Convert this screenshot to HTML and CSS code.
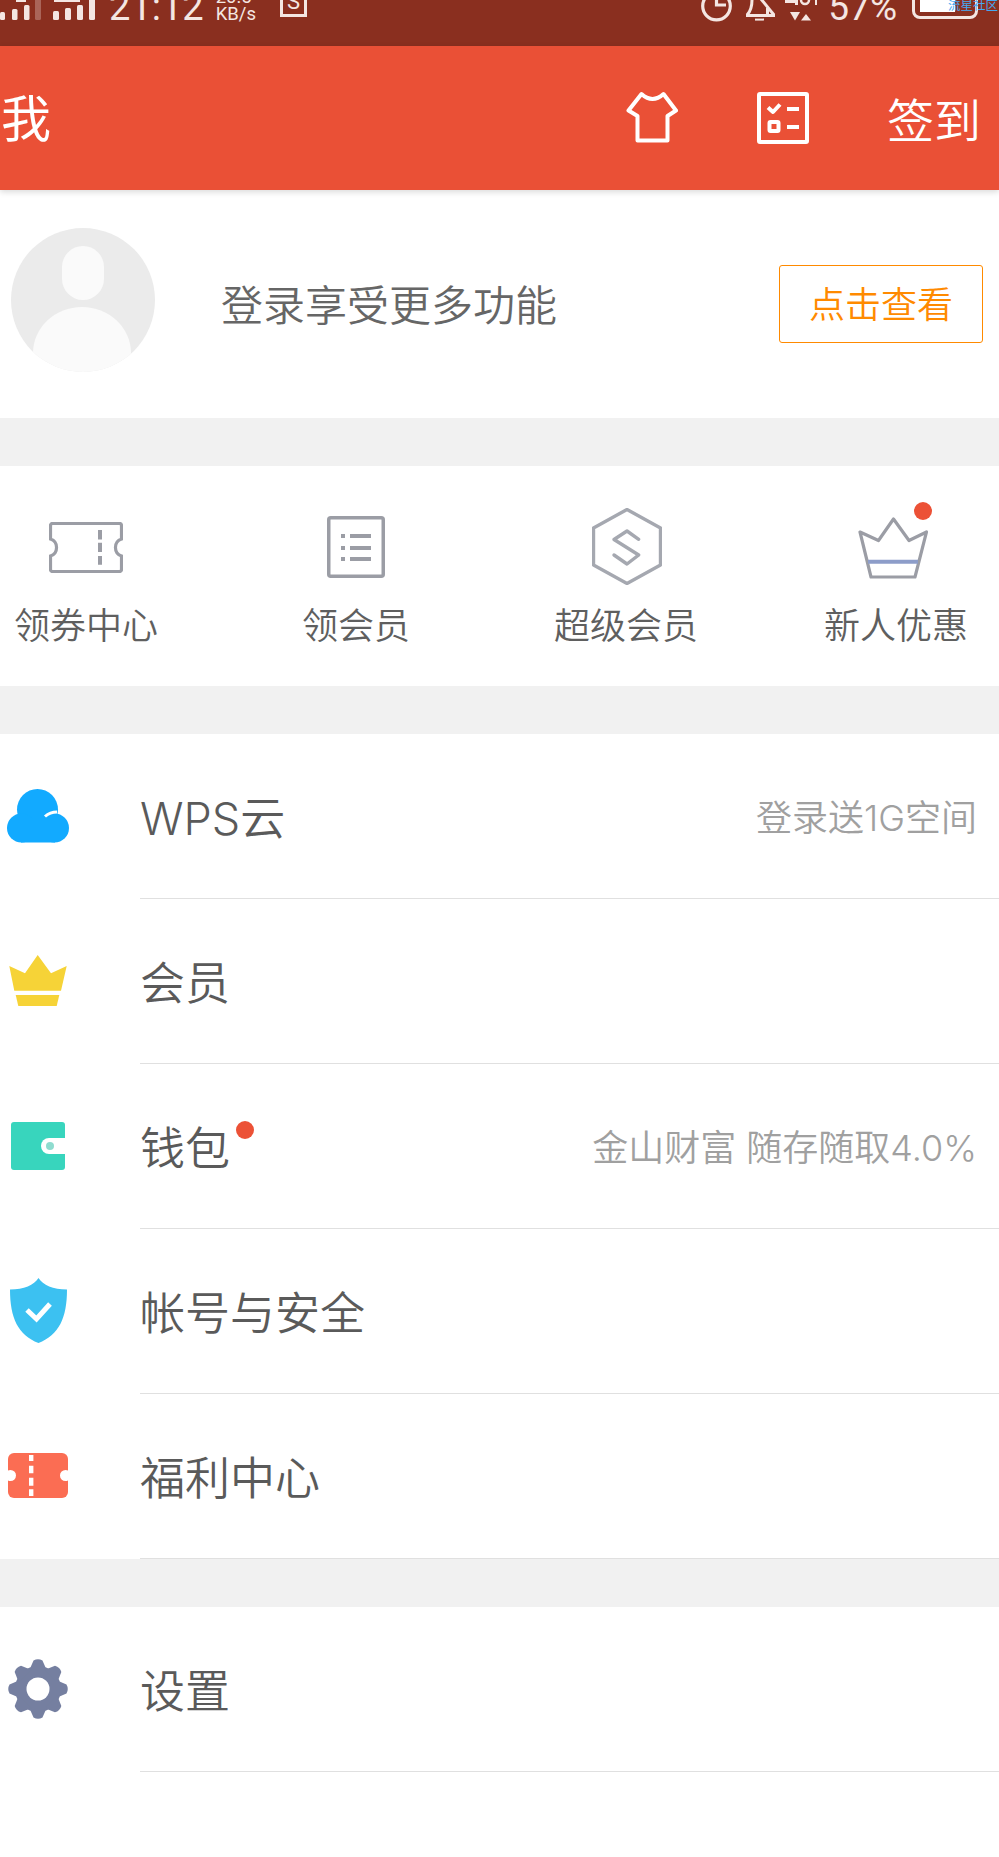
FILE: index.html
```html
<!DOCTYPE html>
<html lang="zh-CN">

<head>
    <meta charset="UTF-8">
    <meta name="viewport" content="width=device-width, initial-scale=1.0">
    <title>我</title>
    <link rel="stylesheet" href="styles.css">
</head>

<body>
    <div class="status-bar">
        <svg class="signal" width="96" height="21" viewBox="0 0 96 21">
            <rect x="0" y="12" width="5" height="8" rx="1.5"/>
            <rect x="12" y="9" width="5.5" height="11" rx="1.5"/>
            <rect x="24" y="5" width="5.5" height="15" rx="1.5"/>
            <rect x="35" y="-2" width="6" height="22" rx="1.5" opacity="0.3"/>
            <rect x="16" y="0" width="10" height="2"/>
            <rect x="53" y="11" width="6" height="9" rx="1.5"/>
            <rect x="65" y="8" width="6" height="12" rx="1.5"/>
            <rect x="77" y="5" width="6" height="15" rx="1.5"/>
            <rect x="89" y="-2" width="6" height="22" rx="1.5"/>
            <rect x="54" y="0" width="26" height="2"/>
        </svg>
        <span class="clock">21:12</span>
        <div class="speed"><span>20.5</span><span>KB/s</span></div>
        <div class="sim-box">S</div>
        <svg class="alarm" width="32" height="22" viewBox="0 0 32 22" fill="none" stroke="#f4e6e2" stroke-width="3.2">
            <circle cx="15.5" cy="6" r="13.8"/>
            <path d="M15.5 -4V5H25"/>
        </svg>
        <svg class="bell" width="31" height="21" viewBox="0 0 31 21" fill="none" stroke="#f4e6e2" stroke-width="3">
            <path d="M1 15.5H30M2 15C6 11 7 6 7 0M22.500 8V15"/>
            <path d="M16 -1L29 15"/>
            <path d="M10 19.6H19" stroke-width="2"/>
        </svg>
        <svg class="net" width="33" height="21" viewBox="0 0 33 21" fill="#f4e6e2">
            <path d="M5 12H15L10 20.5z"/>
            <path d="M16 20.5H26L21 14z"/>
            <rect x="0" y="0" width="11" height="3"/>
            <rect x="10" y="0" width="3" height="5"/>
            <circle cx="20" cy="0" r="4" fill="none" stroke="#f4e6e2" stroke-width="2.5"/>
            <rect x="30" y="0" width="2" height="5"/>
        </svg>
        <span class="percent">57%</span>
        <div class="battery"><div class="battery-fill"></div></div>
        <span class="watermark">流星社区</span>
    </div>

    <header class="top-bar">
        <h1 class="page-title">我</h1>
        <svg class="shirt" width="52" height="52" viewBox="0 0 52 52" fill="none" stroke="#fff" stroke-width="4" stroke-linejoin="round">
            <path d="M15.5 3Q26.5 13 37.500 3L50 19.5L41.5 25V49.5H11.5V25L2.5 19.5z"/>
        </svg>
        <svg class="tasks" width="52" height="52" viewBox="0 0 52 52" fill="none" stroke="#fff" stroke-width="4" stroke-linejoin="round">
            <rect x="2" y="2" width="48" height="48" rx="1"/>
            <path d="M11 15.5L16 20L23 12.5M30 17H42M30 35H42"/>
            <rect x="12.5" y="30" width="9" height="9" rx="1"/>
        </svg>
        <span class="sign-in">签到</span>
    </header>

    <section class="profile">
        <svg class="avatar" width="144" height="144" viewBox="0 0 144 144">
            <clipPath id="avatarClip"><circle cx="72" cy="72" r="72"/></clipPath>
            <circle cx="72" cy="72" r="72" fill="#ebebeb"/>
            <rect x="51" y="18" width="42" height="54" rx="21" fill="#fafafa"/>
            <ellipse cx="71" cy="125" rx="49" ry="46" fill="#fafafa" clip-path="url(#avatarClip)"/>
        </svg>
        <p class="profile-text">登录享受更多功能</p>
        <a class="profile-btn">点击查看</a>
    </section>

    <section class="shortcuts">
        <div class="shortcut">
            <div class="shortcut-icon">
                <svg width="74" height="51" viewBox="0 0 74 51" fill="none" stroke="#9b9da5" stroke-width="3.2">
                    <path d="M3.5 1.5H70.5a2 2 0 0 1 2 2V17a9 9 0 0 0 0 17V47.5a2 2 0 0 1-2 2H3.5a2 2 0 0 1-2-2V34a9 9 0 0 0 0-17V3.5a2 2 0 0 1 2-2z"/>
                    <path d="M51 8V17.5M51 20.7V30M51 34V42.7" stroke-width="4"/>
                </svg>
            </div>
            <span>领券中心</span>
        </div>
        <div class="shortcut">
            <div class="shortcut-icon">
                <svg width="58" height="62" viewBox="0 0 58 62" fill="none" stroke="#9b9da5" stroke-width="3.5">
                    <rect x="1.75" y="1.75" width="54.5" height="58.5" rx="2"/>
                    <path d="M14 20H18M23 20H44M14 32H18M23 32H44M14 43H18M23 43H44" stroke-width="4"/>
                </svg>
            </div>
            <span>领会员</span>
        </div>
        <div class="shortcut">
            <div class="shortcut-icon">
                <svg class="hex-icon" width="70" height="77" viewBox="0 0 70 77" fill="none" stroke="#a5a8b0" stroke-width="3.4" stroke-linejoin="round" stroke-linecap="round">
                    <path d="M35 1.5L68.5 20V57L35 75.5L1.5 57V20z"/>
                    <path d="M46.7 31.3L35 23L22 31.5L46.7 47L35 56L22 47"/>
                </svg>
            </div>
            <span>超级会员</span>
        </div>
        <div class="shortcut">
            <div class="shortcut-icon">
                <svg class="crown-icon" width="70" height="62" viewBox="0 0 70 62" fill="none" stroke="#9b9da5" stroke-width="3.2" stroke-linejoin="round">
                    <path d="M2 15L20.5 23.5L35.5 2L51 23.5L68.5 15L57 60H13z"/>
                    <path d="M10 44.7H60" stroke="#8d9dc9" stroke-width="4"/>
                </svg>
                <i class="red-dot shortcut-dot"></i>
            </div>
            <span>新人优惠</span>
        </div>
    </section>

    <section class="menu">
        <div class="menu-row">
            <div class="menu-icon">
                <svg width="62" height="54" viewBox="0 0 62 54" fill="#12aaff">
                    <circle cx="30.5" cy="20.5" r="20.5"/>
                    <circle cx="14.5" cy="39" r="14.5"/>
                    <circle cx="47.5" cy="39" r="14.5"/>
                    <rect x="14" y="30" width="34" height="23.5"/>
                    <path d="M38 27.5Q43 23 50 23" fill="none" stroke="#fff" stroke-width="3"/>
                </svg>
            </div>
            <div class="menu-body">
                <span class="menu-label">WPS云</span>
                <span class="menu-note">登录送1G空间</span>
            </div>
        </div>
        <div class="menu-row">
            <div class="menu-icon">
                <svg width="58" height="51" viewBox="0 0 58 51" fill="#f6d337">
                    <path d="M28.7 0L42 18.3L57.7 11L52 35.7H5.3L.3 11L16 18.3z"/>
                    <path d="M6.7 40H50.3L47.7 51H9.3z"/>
                </svg>
            </div>
            <div class="menu-body">
                <span class="menu-label">会员</span>
            </div>
        </div>
        <div class="menu-row">
            <div class="menu-icon">
                <svg width="54" height="48" viewBox="0 0 54 48">
                    <rect width="54" height="48" rx="3" fill="#38d5bd"/>
                    <path d="M54 16H38a8 8 0 0 0 0 16H54z" fill="#fff"/>
                    <circle cx="39" cy="24" r="4" fill="#8fdccf"/>
                </svg>
            </div>
            <div class="menu-body">
                <span class="menu-label">钱包<i class="red-dot label-dot"></i></span>
                <span class="menu-note">金山财富&nbsp;随存随取4.0%</span>
            </div>
        </div>
        <div class="menu-row">
            <div class="menu-icon">
                <svg width="57" height="65" viewBox="0 0 57 65">
                    <path d="M28.5 0C24 7 14 11.5 0 11.5C0 40 8 57 28.5 65C49 57 57 40 57 11.5C43 11.5 33 7 28.5 0z" fill="#3cc1f1"/>
                    <path d="M17 32L26.5 41L40 26" fill="none" stroke="#fff" stroke-width="5"/>
                </svg>
            </div>
            <div class="menu-body">
                <span class="menu-label">帐号与安全</span>
            </div>
        </div>
        <div class="menu-row">
            <div class="menu-icon">
                <svg width="60" height="45" viewBox="0 0 60 45">
                    <rect width="60" height="45" rx="6" fill="#fb6d53"/>
                    <circle cx="2.5" cy="22.5" r="5.5" fill="#fff"/>
                    <circle cx="57.5" cy="22.5" r="5.5" fill="#fff"/>
                    <path d="M23.2 2V8M23.2 12.7V20.3M23.2 24.7V32.7M23.2 36.3V43" stroke="#fff" stroke-width="4.4"/>
                </svg>
            </div>
            <div class="menu-body">
                <span class="menu-label">福利中心</span>
            </div>
        </div>
    </section>

    <section class="menu">
        <div class="menu-row">
            <div class="menu-icon">
                <svg width="60" height="60" viewBox="0 0 60 60">
                    <g fill="#757fa0">
                        <circle cx="30" cy="30" r="23"/>
                        <path id="gearTooth" d="M21 12L25.5 1.5Q30 -1 34.500 1.500L39 12z"/>
                        <use href="#gearTooth" transform="rotate(45 30 30)"/>
                        <use href="#gearTooth" transform="rotate(90 30 30)"/>
                        <use href="#gearTooth" transform="rotate(135 30 30)"/>
                        <use href="#gearTooth" transform="rotate(180 30 30)"/>
                        <use href="#gearTooth" transform="rotate(225 30 30)"/>
                        <use href="#gearTooth" transform="rotate(270 30 30)"/>
                        <use href="#gearTooth" transform="rotate(315 30 30)"/>
                    </g>
                    <circle cx="30" cy="30" r="11.500" fill="#fff"/>
                </svg>
            </div>
            <div class="menu-body">
                <span class="menu-label">设置</span>
            </div>
        </div>
    </section>
</body>

</html>
```

FILE: styles.css
```css
* {
    box-sizing: border-box;
    font-family: Roboto, 'Noto Sans CJK SC', sans-serif;
}

body {
    margin: 0;
    background-color: #fff;
    color: #5a5a5a;
}

.status-bar {
    display: flex;
    align-items: flex-end;
    height: 46px;
    padding-bottom: 25px;
    background-color: #8a2f1f;
    color: #f4e6e2;
    overflow: hidden;
    position: relative;
}

.signal {
    fill: #f4e6e2;
    flex: none;
}

.clock {
    font-size: 38px;
    line-height: 40px;
    margin-left: 13px;
    margin-bottom: -6px;
    color: #f4e6e2;
}

.speed {
    display: flex;
    flex-direction: column;
    margin-left: 12px;
    font-size: 18.5px;
    line-height: 17px;
    margin-bottom: -2px;
}

.sim-box {
    width: 27px;
    height: 30px;
    margin-left: 24px;
    margin-bottom: 4px;
    padding-top: 6px;
    border: 3px solid #f4e6e2;
    border-top: none;
    font-size: 22px;
    line-height: 18px;
    text-align: center;
}

.alarm {
    margin-left: auto;
    margin-bottom: -1px;
    flex: none;
}

.bell {
    margin-left: 12px;
    flex: none;
}

.net {
    margin-left: 9px;
    flex: none;
}

.percent {
    font-size: 37px;
    line-height: 40px;
    margin-left: 10px;
    margin-bottom: -7px;
    color: #f4e6e2;
}

.battery {
    width: 66px;
    height: 30px;
    margin-left: 15px;
    margin-right: 21px;
    margin-bottom: 2px;
    padding: 0 0 4px 5px;
    border: 3px solid #f4e6e2;
    border-radius: 8px;
    display: flex;
    align-items: flex-end;
}

.battery-fill {
    width: 35px;
    height: 100%;
    background-color: #fff;
}

.watermark {
    position: absolute;
    top: -2px;
    right: 1px;
    font-size: 12.5px;
    line-height: 16px;
    color: #46a8f0;
}

.top-bar {
    display: flex;
    align-items: center;
    height: 144px;
    padding: 0 18px 0 1px;
    background-color: #ea5036;
    color: #fff;
    position: relative;
    box-shadow: 0 2px 6px rgba(0, 0, 0, 0.15);
}

.page-title {
    margin: 4px 0 0;
    font-size: 50px;
    font-weight: 400;
    line-height: 60px;
}

.shirt {
    margin-left: auto;
    margin-top: -2px;
}

.tasks {
    margin-left: 79px;
}

.sign-in {
    margin-left: 78px;
    margin-top: -2px;
    font-size: 47px;
    font-weight: 350;
}

.profile {
    display: flex;
    align-items: center;
    height: 228px;
    padding: 0 16px 0 11px;
}

.avatar {
    margin-top: -8px;
    flex: none;
}

.profile-text {
    margin: -4px 0 0 66px;
    font-size: 42px;
    font-weight: 350;
    color: #666;
}

.profile-btn {
    width: 204px;
    height: 78px;
    margin-left: auto;
    border: 1px solid #ff8a00;
    border-radius: 3px;
    font-size: 36px;
    font-weight: 350;
    line-height: 80px;
    text-align: center;
    color: #ff8a00;
}

.shortcuts {
    display: grid;
    grid-template-columns: repeat(4, 144px);
    justify-content: space-between;
    height: 220px;
    margin-top: 48px;
    margin-bottom: 48px;
    padding: 39px 31px 0 14px;
    box-shadow: 0 -48px 0 #f1f1f1, 0 48px 0 #f1f1f1;
}

.shortcut {
    display: flex;
    flex-direction: column;
    align-items: center;
    font-size: 36px;
    font-weight: 350;
    line-height: 50px;
    white-space: nowrap;
    color: #5f5f5f;
}

.shortcut-icon {
    display: flex;
    align-items: center;
    justify-content: center;
    width: 100%;
    height: 84px;
    margin-bottom: 13px;
    position: relative;
}

.hex-icon {
    margin-left: 1px;
    margin-top: -2px;
}

.crown-icon {
    margin-left: -6px;
    margin-top: 2px;
}

.red-dot {
    position: absolute;
    width: 18px;
    height: 18px;
    border-radius: 50%;
    background-color: #ec5136;
}

.shortcut-dot {
    left: 90px;
    top: -3px;
}

.menu + .menu {
    margin-top: 48px;
    box-shadow: 0 -48px 0 #f1f1f1;
}

.menu-row {
    display: flex;
    align-items: center;
    height: 165px;
}

.menu-icon {
    display: flex;
    justify-content: center;
    flex: none;
    width: 76px;
    margin-top: -2px;
    margin-right: 64px;
}

.menu-body {
    display: flex;
    align-items: center;
    justify-content: space-between;
    flex: 1;
    height: 100%;
    padding-right: 22px;
    border-bottom: 1px solid #e0e0e0;
}

.menu-label {
    margin-top: -2px;
    font-family: Inter, 'Noto Sans CJK SC', sans-serif;
    font-size: 45px;
    font-weight: 350;
    position: relative;
}

.menu-note {
    margin-top: -2px;
    font-family: Inter, 'Noto Sans CJK SC', sans-serif;
    font-size: 36px;
    font-weight: 350;
    color: #a0a0a0;
}

.label-dot {
    left: 96px;
    top: 8px;
}
```
